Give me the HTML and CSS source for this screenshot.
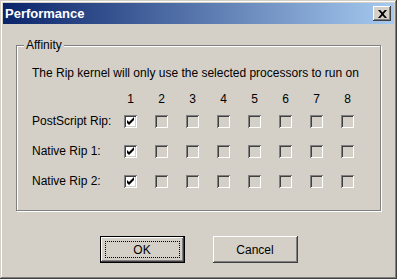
FILE: index.html
```html
<!DOCTYPE html>
<html lang="en">
<head>
    <meta charset="UTF-8">
    <title>Performance</title>
    <link rel="stylesheet" href="styles.css">
</head>
<body>
    <div class="window">
        <div class="titlebar">
            <span class="title">Performance</span>
            <button class="close-btn" title="Close">
                <svg width="9" height="8" viewBox="0 0 9 8">
                    <path d="M0 0h2.2l2.3 2.6L6.8 0H9L5.6 4 9 8H6.8L4.5 5.4 2.2 8H0l3.4-4z" fill="#000"/>
                </svg>
            </button>
        </div>

        <div class="content">
            <div class="group">
                <span class="group-label">Affinity</span>
                <p class="intro">The Rip kernel will only use the selected processors to run on</p>

                <div class="affinity-grid">
                    <span></span>
                    <span class="num">1</span><span class="num">2</span><span class="num">3</span><span class="num">4</span>
                    <span class="num">5</span><span class="num">6</span><span class="num">7</span><span class="num">8</span>

                    <span class="row-label">PostScript Rip:</span>
                    <span class="cell"><span class="check checked"></span></span>
                    <span class="cell"><span class="check"></span></span>
                    <span class="cell"><span class="check"></span></span>
                    <span class="cell"><span class="check"></span></span>
                    <span class="cell"><span class="check"></span></span>
                    <span class="cell"><span class="check"></span></span>
                    <span class="cell"><span class="check"></span></span>
                    <span class="cell"><span class="check"></span></span>

                    <span class="row-label">Native Rip 1:</span>
                    <span class="cell"><span class="check checked"></span></span>
                    <span class="cell"><span class="check"></span></span>
                    <span class="cell"><span class="check"></span></span>
                    <span class="cell"><span class="check"></span></span>
                    <span class="cell"><span class="check"></span></span>
                    <span class="cell"><span class="check"></span></span>
                    <span class="cell"><span class="check"></span></span>
                    <span class="cell"><span class="check"></span></span>

                    <span class="row-label">Native Rip 2:</span>
                    <span class="cell"><span class="check checked"></span></span>
                    <span class="cell"><span class="check"></span></span>
                    <span class="cell"><span class="check"></span></span>
                    <span class="cell"><span class="check"></span></span>
                    <span class="cell"><span class="check"></span></span>
                    <span class="cell"><span class="check"></span></span>
                    <span class="cell"><span class="check"></span></span>
                    <span class="cell"><span class="check"></span></span>
                </div>
            </div>

            <div class="buttons">
                <button class="btn default"><span class="focus">OK</span></button>
                <button class="btn">Cancel</button>
            </div>
        </div>
    </div>
</body>
</html>
```

FILE: styles.css
```css
* {
    margin: 0;
    padding: 0;
    box-sizing: border-box;
}

body {
    background-color: #d4d0c8;
    font-family: 'Liberation Sans', Arial, sans-serif;
    font-size: 12px;
    color: #000;
}

.window {
    width: 397px;
    height: 279px;
    padding: 3px;
    background-color: #d4d0c8;
    box-shadow: inset -1px -1px 0 #404040, inset 1px 1px 0 #d4d0c8,
                inset -2px -2px 0 #808080, inset 2px 2px 0 #fff;
}

.titlebar {
    height: 21px;
    display: flex;
    align-items: center;
    justify-content: space-between;
    padding: 0 3px 0 2px;
    background: linear-gradient(to right, #0a246a, #a6caf0);
}

.title {
    color: #fff;
    font-weight: bold;
    font-size: 13px;
}

.close-btn {
    width: 18px;
    height: 15px;
    display: flex;
    align-items: center;
    justify-content: center;
    background-color: #d4d0c8;
    border: none;
    box-shadow: inset -1px -1px 0 #404040, inset 1px 1px 0 #fff,
                inset -2px -2px 0 #808080;
}

.content {
    padding: 21px 13px 0 13px;
}

.group {
    position: relative;
    height: 166px;
    border: 1px solid #808080;
    box-shadow: 1px 1px 0 #fff, inset 1px 1px 0 #fff;
    padding: 20px 0 0 15px;
}

.group-label {
    position: absolute;
    top: -8px;
    left: 7px;
    padding: 0 2px;
    background-color: #d4d0c8;
    line-height: 14px;
}

.intro {
    line-height: 14px;
}

.affinity-grid {
    display: grid;
    grid-template-columns: 83px repeat(8, 31px);
    grid-template-rows: 13px repeat(3, 30px);
    margin-top: 13px;
    align-items: center;
}

.num {
    text-align: center;
    line-height: 13px;
}

.cell {
    display: flex;
    justify-content: center;
}

.check {
    width: 13px;
    height: 13px;
    background-color: #d4d0c8;
    box-shadow: inset 1px 1px 0 #808080, inset -1px -1px 0 #fff,
                inset 2px 2px 0 #404040, inset -2px -2px 0 #d4d0c8;
}

.check.checked {
    background-color: #fff;
    background-image: url("data:image/svg+xml,%3Csvg xmlns='http://www.w3.org/2000/svg' width='13' height='13'%3E%3Cpath d='M3 5l2 2 5-5v3l-5 5-2-2z' fill='%23000'/%3E%3C/svg%3E");
}

.buttons {
    display: flex;
    justify-content: center;
    gap: 28px;
    margin-top: 25px;
}

.btn {
    width: 85px;
    height: 27px;
    font-family: 'Liberation Sans', Arial, sans-serif;
    font-size: 12px;
    color: #000;
    background-color: #d4d0c8;
    border: none;
    box-shadow: inset -1px -1px 0 #404040, inset 1px 1px 0 #fff,
                inset -2px -2px 0 #808080;
}

.btn.default {
    display: flex;
    padding: 4px;
    border: 1px solid #000;
}

.focus {
    flex: 1;
    display: flex;
    align-items: center;
    justify-content: center;
    border: 1px dotted #000;
}
```
